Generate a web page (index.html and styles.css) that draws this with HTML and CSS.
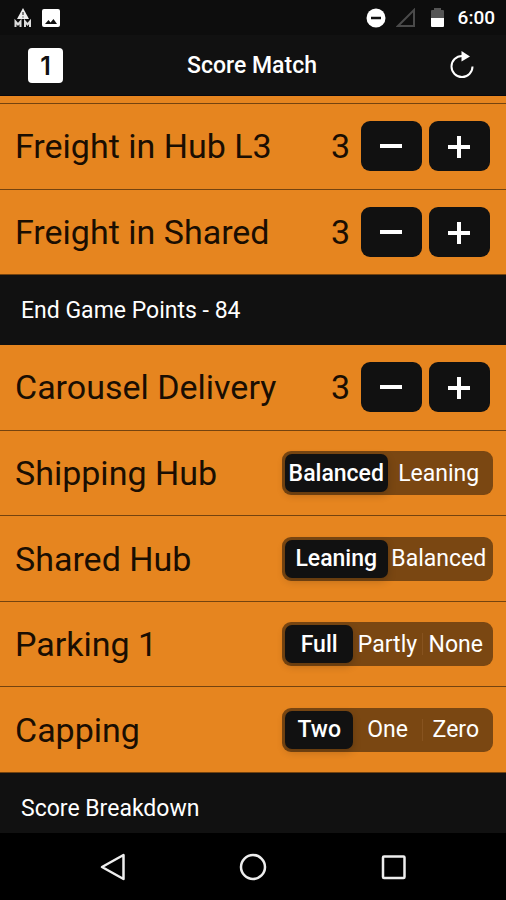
FILE: index.html
```html
<!DOCTYPE html>
<html lang="en">
<head>
<meta charset="utf-8">
<meta name="viewport" content="width=device-width, initial-scale=1">
<title>Score Match</title>
<link rel="stylesheet" href="styles.css">
</head>
<body>
<div class="status">
  <div class="status-group">
    <svg width="18" height="20" viewBox="0 0 18 20" aria-hidden="true"><path d="M9 0 15 11H3Z" fill="#eee"/><path d="M9 4v3M9 8.500v1" stroke="#111" stroke-width="1"/><path d="M1.500 19v-5.500l2.500 3 2.500-3v5.500M11 19v-5.500l2.500 3 2.500-3v5.500" fill="none" stroke="#ddd" stroke-width="2"/></svg>
    <svg width="18" height="18" viewBox="0 0 18 18" aria-hidden="true"><rect width="18" height="18" rx="2" fill="#fff"/><path d="M3 15l3.500-4 2 2.500L11.500 10 15 15Z" fill="#111"/></svg>
  </div>
  <div class="status-group">
    <svg width="20" height="20" viewBox="0 0 20 20" aria-hidden="true"><circle cx="10" cy="10" r="9.500" fill="#fff"/><path d="M5 10h10" stroke="#111" stroke-width="2.500"/></svg>
    <svg width="20" height="20" viewBox="0 0 20 20" aria-hidden="true"><path d="M18 2v16H2Z" fill="none" stroke="#4a4a4a" stroke-width="2"/></svg>
    <svg width="22" height="20" viewBox="0 0 22 20" aria-hidden="true"><path d="M5 3q0-1 1-1h2V0h7v2h2q1 0 1 1v7H5Z" fill="#555"/><path d="M5 10h13v8q0 1-1 1H6q-1 0-1-1Z" fill="#fff"/></svg>
    <span class="clock">6:00</span>
  </div>
</div>
<header class="appbar">
  <button class="team" type="button">1</button>
  <h1 class="title">Score Match</h1>
  <button class="reset" type="button" aria-label="Reset"><svg width="28" height="30" viewBox="0 0 28 30"><path d="M14 5A10.500 10.500 0 1 0 24.500 15.500" fill="none" stroke="#fff" stroke-width="2"/><path d="M13.500 0 22 5.500 13.500 10.500Z" fill="#fff"/></svg></button>
</header>
<main class="list">
  <div class="previous"></div>
  <div class="row"><span class="name">Freight in Hub L3</span><span class="value">3</span>
    <button class="step" type="button" aria-label="Decrease"><svg width="24" height="24" viewBox="0 0 24 24"><path d="M0 12h22" stroke="#fff" stroke-width="4"/></svg></button>
    <button class="step" type="button" aria-label="Increase"><svg width="24" height="24" viewBox="0 0 24 24"><path d="M0 13h22M11 2v22" stroke="#fff" stroke-width="4"/></svg></button></div>
  <div class="row"><span class="name">Freight in Shared</span><span class="value">3</span>
    <button class="step" type="button" aria-label="Decrease"><svg width="24" height="24" viewBox="0 0 24 24"><path d="M0 12h22" stroke="#fff" stroke-width="4"/></svg></button>
    <button class="step" type="button" aria-label="Increase"><svg width="24" height="24" viewBox="0 0 24 24"><path d="M0 13h22M11 2v22" stroke="#fff" stroke-width="4"/></svg></button></div>
  <h2 class="section">End Game Points - 84</h2>
  <div class="row"><span class="name">Carousel Delivery</span><span class="value">3</span>
    <button class="step" type="button" aria-label="Decrease"><svg width="24" height="24" viewBox="0 0 24 24"><path d="M0 12h22" stroke="#fff" stroke-width="4"/></svg></button>
    <button class="step" type="button" aria-label="Increase"><svg width="24" height="24" viewBox="0 0 24 24"><path d="M0 13h22M11 2v22" stroke="#fff" stroke-width="4"/></svg></button></div>
  <div class="row"><span class="name">Shipping Hub</span>
    <div class="segments" role="radiogroup" aria-label="Shipping Hub">
      <label class="segment"><input type="radio" name="shipping" checked><span>Balanced</span></label>
      <label class="segment"><input type="radio" name="shipping"><span>Leaning</span></label>
    </div></div>
  <div class="row"><span class="name">Shared Hub</span>
    <div class="segments" role="radiogroup" aria-label="Shared Hub">
      <label class="segment"><input type="radio" name="shared" checked><span>Leaning</span></label>
      <label class="segment"><input type="radio" name="shared"><span>Balanced</span></label>
    </div></div>
  <div class="row"><span class="name">Parking 1</span>
    <div class="segments" role="radiogroup" aria-label="Parking 1">
      <label class="segment"><input type="radio" name="parking" checked><span>Full</span></label>
      <label class="segment"><input type="radio" name="parking"><span>Partly</span></label>
      <label class="segment divided"><input type="radio" name="parking"><span>None</span></label>
    </div></div>
  <div class="row"><span class="name">Capping</span>
    <div class="segments" role="radiogroup" aria-label="Capping">
      <label class="segment"><input type="radio" name="capping" checked><span>Two</span></label>
      <label class="segment"><input type="radio" name="capping"><span>One</span></label>
      <label class="segment divided"><input type="radio" name="capping"><span>Zero</span></label>
    </div></div>
  <h2 class="section last">Score Breakdown</h2>
</main>
<nav class="navbar">
  <button type="button" aria-label="Back"><svg width="28" height="28" viewBox="0 0 28 28"><path d="M24.500 2v24L3 14Z" fill="none" stroke="#eee" stroke-width="2.500" stroke-linejoin="round"/></svg></button>
  <button type="button" aria-label="Home"><svg width="28" height="28" viewBox="0 0 28 28"><circle cx="14" cy="14" r="12" fill="none" stroke="#eee" stroke-width="2.500"/></svg></button>
  <button type="button" aria-label="Recent apps"><svg width="28" height="28" viewBox="0 0 28 28"><rect x="4" y="3.500" width="21.500" height="21.500" rx="1" fill="none" stroke="#eee" stroke-width="2.500"/></svg></button>
</nav>
</body>
</html>
```
FILE: styles.css
```css
* { box-sizing: border-box; }
body {
  margin: 0;
  min-height: 100vh;
  display: flex;
  flex-direction: column;
  background: #111;
  color: #fff;
  font-family: Roboto, "Liberation Sans", sans-serif;
}
button {
  border: 0;
  padding: 0;
  background: none;
  color: inherit;
  font-family: inherit;
  display: flex;
  align-items: center;
  justify-content: center;
}
svg { display: block; }
.status {
  height: 35px;
  padding: 0 11px 0 14px;
  display: flex;
  align-items: center;
  justify-content: space-between;
  background: #0d0d0d;
}
.status-group { display: flex; align-items: center; gap: 10px; }
.clock { font-size: 19px; font-weight: 500; }
.appbar {
  height: 61px;
  padding: 1px 30px 0 28px;
  display: grid;
  grid-template-columns: 1fr auto 1fr;
  align-items: center;
  border-bottom: 1px solid #08080f;
}
.team {
  width: 35px;
  height: 35px;
  border-radius: 4px;
  background: #fff;
  color: #111;
  font-family: Inter, Roboto, sans-serif;
  font-size: 25px;
  font-weight: 600;
}
.title { margin: 0; font-size: 23px; font-weight: 500; }
.reset { justify-self: end; }
.list {
  flex: 1;
  display: flex;
  flex-direction: column;
  background: #e6851f;
}
.previous { height: 8px; border-bottom: 1px solid #74430f; }
.row {
  flex: 1 1 72px;
  padding: 0 16px 0 15px;
  display: flex;
  align-items: center;
  gap: 7px;
  border-bottom: 1px solid #74430f;
}
.name { flex: 1; color: #1a0e02; font-size: 34px; white-space: nowrap; }
.value { margin-right: 4px; color: #1a0e02; font-size: 34px; }
.step {
  width: 61px;
  height: 50px;
  border-radius: 9px;
  background: #111;
}
.segments {
  width: 211px;
  height: 44px;
  margin-right: -3px;
  padding: 3px;
  display: flex;
  border-radius: 9px;
  background: #7a4712;
}
.segment { flex: 1 1 0; min-width: 0; display: flex; position: relative; }
.segment input { position: absolute; inset: 0; margin: 0; opacity: 0; }
.segment span {
  flex: 1;
  min-width: 0;
  display: flex;
  align-items: center;
  justify-content: center;
  border-radius: 7px;
  font-size: 23px;
  white-space: nowrap;
}
.segment input:checked + span {
  background: #111;
  font-weight: 500;
  box-shadow: 0 3px 8px rgba(0, 0, 0, .2);
}
.divided { background: linear-gradient(#87531f, #87531f) left center / 1px 22px no-repeat; }
.section {
  height: 70px;
  margin: 0;
  padding: 0 21px;
  display: flex;
  align-items: center;
  background: #111;
  font-size: 23px;
  font-weight: 400;
}
.last { height: 60px; padding-top: 10px; }
.navbar {
  height: 67px;
  padding: 0 43px;
  display: grid;
  grid-template-columns: repeat(3, 1fr);
  justify-items: center;
  align-items: center;
  background: #000;
}
```
